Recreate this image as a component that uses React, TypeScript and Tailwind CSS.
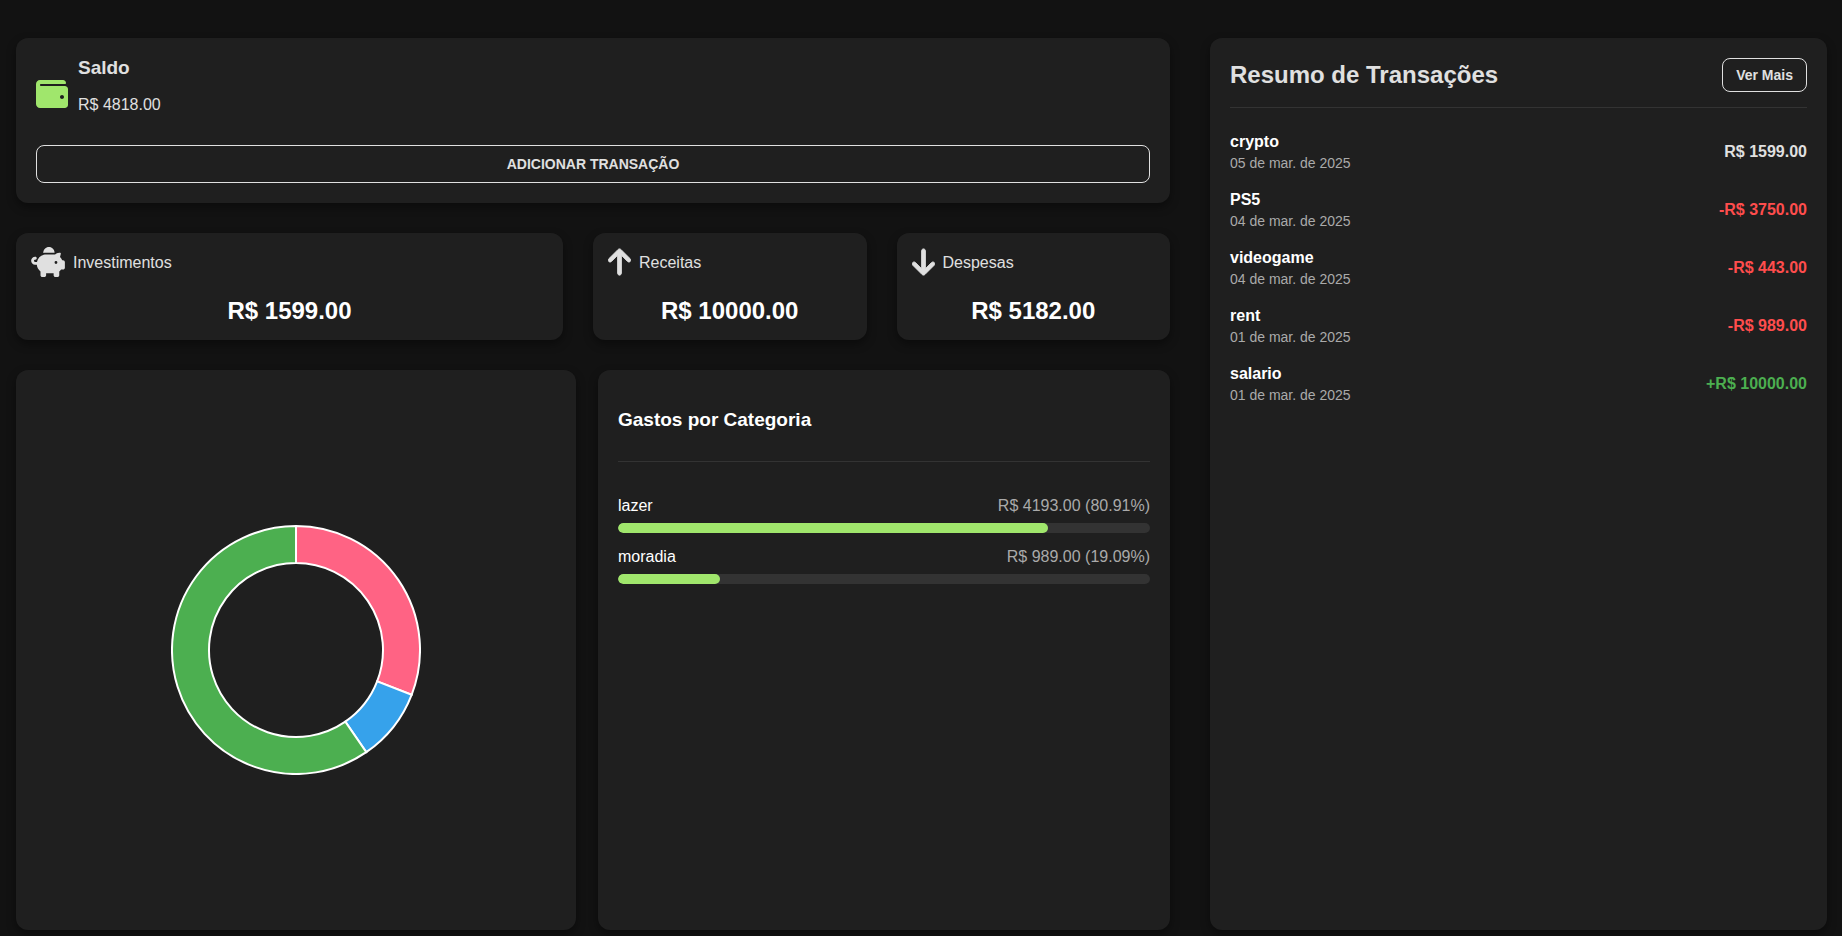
import type { ReactNode } from "react";
import { FaWallet } from "react-icons/fa";
import { FaArrowDown, FaArrowUp, FaPiggyBank } from "react-icons/fa6";

const card = "rounded-xl bg-[#1f1f1f] shadow-[0_4px_10px_rgba(0,0,0,0.4)]";

type Kind = "investment" | "expense" | "income";

const transactions: { name: string; date: string; amount: string; kind: Kind }[] = [
  { name: "crypto", date: "05 de mar. de 2025", amount: "R$ 1599.00", kind: "investment" },
  { name: "PS5", date: "04 de mar. de 2025", amount: "-R$ 3750.00", kind: "expense" },
  { name: "videogame", date: "04 de mar. de 2025", amount: "-R$ 443.00", kind: "expense" },
  { name: "rent", date: "01 de mar. de 2025", amount: "-R$ 989.00", kind: "expense" },
  { name: "salario", date: "01 de mar. de 2025", amount: "+R$ 10000.00", kind: "income" },
];

const amountColor: Record<Kind, string> = {
  investment: "text-[#e0e0e0]",
  expense: "text-[#ff4d4d]",
  income: "text-[#4caf50]",
};

const categories = [
  { name: "lazer", total: "4193.00", percent: 80.91 },
  { name: "moradia", total: "989.00", percent: 19.09 },
];

const slices = [
  { value: 5182, color: "#ff6384" },
  { value: 1599, color: "#36a2eb" },
  { value: 10000, color: "#4caf50" },
];

function Donut() {
  const total = slices.reduce((sum, s) => sum + s.value, 0);
  const outer = 124;
  const inner = 87;
  const at = (r: number, a: number) => `${125 + r * Math.sin(a)} ${125 - r * Math.cos(a)}`;
  let angle = 0;
  return (
    <svg viewBox="0 0 250 250" className="size-[250px]" aria-hidden="true">
      {slices.map((s) => {
        const start = angle;
        const end = start + (s.value / total) * Math.PI * 2;
        angle = end;
        const large = end - start > Math.PI ? 1 : 0;
        return (
          <path
            key={s.color}
            d={`M${at(outer, start)}A${outer} ${outer} 0 ${large} 1 ${at(outer, end)}L${at(inner, end)}A${inner} ${inner} 0 ${large} 0 ${at(inner, start)}Z`}
            fill={s.color}
            stroke="#fff"
            strokeWidth="2"
          />
        );
      })}
    </svg>
  );
}

function SummaryCard({ icon, label, value }: { icon: ReactNode; label: string; value: string }) {
  return (
    <section className={`${card} px-[15px] pt-3.5 pb-[13px]`}>
      <div className="flex items-end gap-2 text-[#e0e0e0]">
        {icon}
        <h3 className="leading-7">{label}</h3>
      </div>
      <p className="mt-[18px] text-center text-2xl font-bold text-white">{value}</p>
    </section>
  );
}

export default function App() {
  return (
    <div className="min-h-screen bg-[#121212] font-['Liberation_Sans',Arial,sans-serif] text-base">
      <main className="grid grid-cols-[1154fr_617fr] gap-10 pt-[38px] pr-[15px] pb-1.5 pl-4">
        <div className="flex flex-col gap-[30px]">
          <section className={`${card} p-5 text-[#e0e0e0]`}>
            <div className="flex items-end gap-2.5">
              <FaWallet className="mb-[7px] size-8 text-[#a0e66c]" />
              <div>
                <h2 className="text-[19px] leading-5 font-bold">Saldo</h2>
                <p className="mt-[15px]">R$ 4818.00</p>
              </div>
            </div>
            <button
              type="button"
              className="mt-7 block h-[38px] w-full rounded-lg border border-[#e0e0e0] text-sm font-bold"
            >
              ADICIONAR TRANSAÇÃO
            </button>
          </section>

          <div className="grid grid-cols-[2fr_1fr_1fr] gap-[30px]">
            <SummaryCard
              icon={<FaPiggyBank className="h-[30px] w-[34px]" />}
              label="Investimentos"
              value="R$ 1599.00"
            />
            <SummaryCard
              icon={<FaArrowUp strokeWidth="16" className="h-[30px] w-[23px]" />}
              label="Receitas"
              value="R$ 10000.00"
            />
            <SummaryCard
              icon={<FaArrowDown strokeWidth="16" className="h-[30px] w-[23px]" />}
              label="Despesas"
              value="R$ 5182.00"
            />
          </div>

          <div className="grid grid-cols-[560fr_572fr] gap-[22px]">
            <section className={`${card} flex aspect-square items-center justify-center`}>
              <Donut />
            </section>
            <section className={`${card} p-5`}>
              <h2 className="border-b border-[#333] pt-[17px] pb-7 text-[19px] leading-[26px] font-bold text-white">
                Gastos por Categoria
              </h2>
              <ul className="mt-8 flex flex-col gap-3">
                {categories.map((c) => (
                  <li key={c.name}>
                    <div className="flex justify-between">
                      <span className="text-white">{c.name}</span>
                      <span className="text-[#aaa]">
                        R$ {c.total} ({c.percent}%)
                      </span>
                    </div>
                    <div className="mt-[5px] h-2.5 overflow-hidden rounded-full bg-[#333]">
                      <div className="h-full rounded-full bg-[#a0e66c]" style={{ width: `${c.percent}%` }} />
                    </div>
                  </li>
                ))}
              </ul>
            </section>
          </div>
        </div>

        <section className={`${card} p-5`}>
          <div className="flex items-center justify-between border-b border-[#333] pb-[15px]">
            <h2 className="text-2xl font-bold text-[#e0e0e0]">Resumo de Transações</h2>
            <button
              type="button"
              className="h-[34px] rounded-lg border border-[#e0e0e0] px-[13px] text-sm font-bold text-[#e0e0e0]"
            >
              Ver Mais
            </button>
          </div>
          <ul className="mt-[23px] flex flex-col gap-4">
            {transactions.map((t) => (
              <li key={t.name} className="flex items-center justify-between">
                <div>
                  <p className="leading-[22px] font-bold text-white">{t.name}</p>
                  <p className="text-sm text-[#aaa]">{t.date}</p>
                </div>
                <span className={`font-bold ${amountColor[t.kind]}`}>{t.amount}</span>
              </li>
            ))}
          </ul>
        </section>
      </main>
    </div>
  );
}
